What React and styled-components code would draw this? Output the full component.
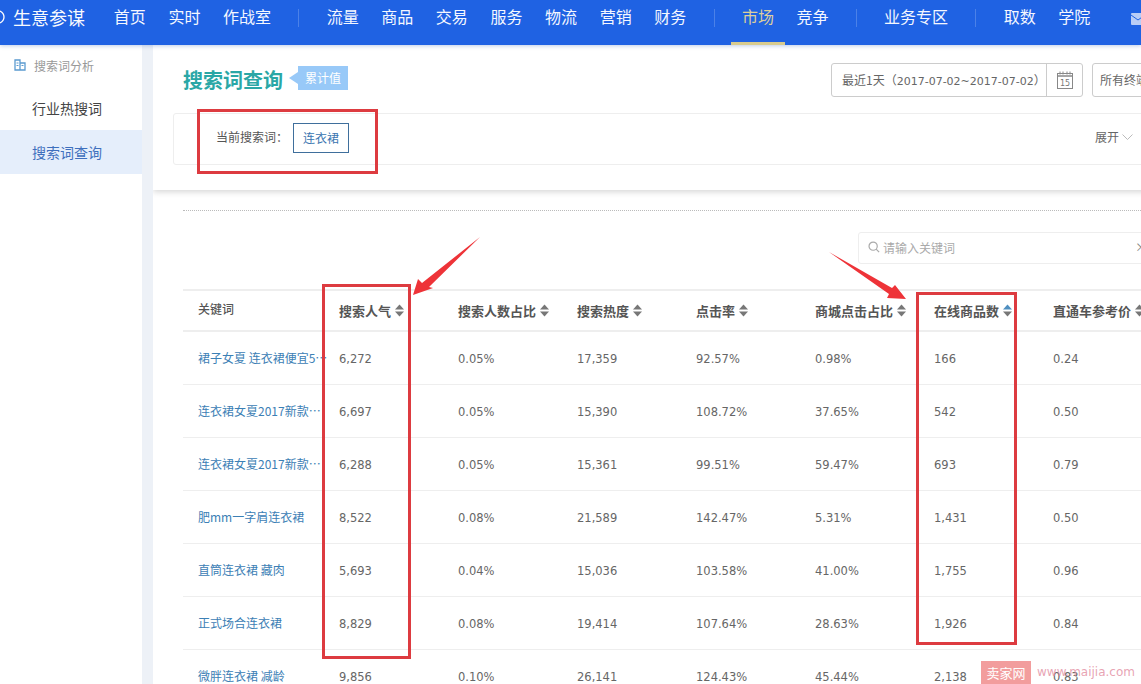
import React from "react";
import styled, { createGlobalStyle } from "styled-components";

const Global = createGlobalStyle`
  html, body { margin: 0; padding: 0; background: #fff; }
  body { font-family: "Noto Sans CJK SC", "Liberation Sans", sans-serif; color: #555; }
  * { box-sizing: border-box; }
`;
const Page = styled.div`position: relative; width: 1141px; height: 684px; overflow: hidden; background: #fff;`;
const TopBar = styled.header`
  height: 45px; background: #1f62e3; display: flex; align-items: flex-start; color: #fff;
  box-shadow: 0 1px 4px rgba(40,90,180,.3); position: relative; z-index: 2;
`;
const LogoArc = styled.svg`width: 5px; height: 14px; margin: 10px 8px 0 0; flex: none;`;
const Brand = styled.div`font-size: 18px; line-height: 35px; width: 72px; margin-right: 17.5px; flex: none; white-space: nowrap; opacity: .97;`;
const NavItem = styled.div`
  flex: none; height: 45px; padding: 0 11.3px; font-size: 16px; line-height: 32px; white-space: nowrap;
  color: ${p => (p.$active ? "#dccf9c" : "#f4f7ff")};
  border-bottom: 3px solid ${p => (p.$active ? "#d8cb8e" : "transparent")};
`;
const NavSep = styled.div`flex: none; width: 1px; height: 18px; margin: 9px 16px 0; background: rgba(255,255,255,.2);`;
const Mail = styled.svg`position: absolute; left: 1131px; top: 13px; width: 14px; height: 12px;`;

const Body = styled.div`display: flex; height: 639px; background: #edf1f7;`;
const Side = styled.aside`flex: none; width: 142px; background: #fff; margin-right: 11px;`;
const SideHead = styled.div`display: flex; align-items: center; gap: 8px; height: 40px; padding: 0 0 0 14px; font-size: 12px; color: #999;`;
const SideItem = styled.div`
  height: 44px; padding-left: 32px; font-size: 14px; line-height: 44px;
  color: ${p => (p.$active ? "#3e6fbd" : "#444")};
  background: ${p => (p.$active ? "#e5eefb" : "transparent")};
`;
const SideList = styled.div`margin-top: 1px;`;

const Main = styled.main`flex: none; width: 988px; background: #fff; overflow: hidden;`;
const TopCard = styled.section`
  width: 1020px; height: 145px; padding: 18px 13px 0 20px; background: #fff;
  box-shadow: 0 2px 6px rgba(0,0,0,.16); position: relative;
`;
const TitleRow = styled.div`display: flex; align-items: center; height: 34px; padding-left: 10px;`;
const Title = styled.h1`margin: 0; font-size: 20px; line-height: 34px; font-weight: 700; color: #2aa7a6; white-space: nowrap;`;
const Badge = styled.span`
  position: relative; margin-left: 15px; width: 50px; height: 24px; background: #98c9f8; color: #fff; font-size: 12px;
  line-height: 24px; text-align: center; margin-top: -4px;
  &::before { content: ""; position: absolute; left: -9px; top: 6px; border: 6px solid transparent; border-left: 0; border-right: 9px solid #98c9f8; }
`;
const DateBox = styled.div`
  margin-left: auto; width: 252px; height: 34px; border: 1px solid #ccc; border-radius: 3px; display: flex; align-items: center;
  font-size: 12px; color: #666; white-space: nowrap;
`;
const DateText = styled.div`flex: none; width: 215px; padding-left: 10px; height: 100%; line-height: 32px; border-right: 1px solid #ccc; text-spacing-trim: space-all; overflow: hidden;`;
const DateDigits = styled.span`font-family: "DejaVu Sans", sans-serif; font-size: 11px;`;
const CalIcon = styled.svg`width: 16px; height: 18px; margin-left: 10px;`;
const SelectBox = styled.div`
  margin-left: 9px; width: 68px; height: 34px; border: 1px solid #ccc; border-radius: 3px; padding-left: 7px;
  font-size: 12px; line-height: 32px; color: #666; white-space: nowrap; overflow: hidden;
`;
const FilterCard = styled.div`
  display: flex; align-items: center; height: 52px; margin-top: 16px; padding: 0 26px 0 42px; border: 1px solid #eee; border-radius: 3px;
  font-size: 12px; color: #555;
`;
const FilterLabel = styled.span`width: 77px; flex: none; margin-top: -5px;`;
const Tag = styled.span`flex: none; width: 56px; height: 30px; margin-top: -3px; border: 1px solid #3f6f9c; color: #3a75b0; text-align: center; line-height: 28px;`;
const Expand = styled.span`margin-left: auto; margin-top: -5px; display: flex; align-items: center; gap: 3px; color: #666;`;

const Content = styled.section`padding: 20px 0 0 30px; width: 1010px;`;
const Dotted = styled.div`border-top: 1px dotted #bbb; height: 0;`;
const SearchBox = styled.div`
  position: relative; margin: 21px 0 25px 675px; width: 290px; height: 32px; border: 1px solid #eee; border-radius: 3px;
  display: flex; align-items: center; gap: 3px; padding: 0 0 2px 9px; font-size: 12px; color: #aaa;
`;
const Clear = styled.span`position: absolute; left: 276px; top: 5px; color: #888; font-size: 12px;`;
const Row = styled.div`
  display: grid; grid-template-columns: 141px repeat(7, 119px); align-items: center; width: 974px;
  height: ${p => (p.$head ? "43px" : "53px")};
  border-top: ${p => (p.$head ? "2px solid #eee" : "0")};
  border-bottom: ${p => (p.$head ? "2px solid #eee" : "1px solid #eee")};
`;
const HeadCell = styled.div`
  display: flex; align-items: center; gap: 4px; padding-left: 15px;
  font-size: ${p => (p.$first ? "12px" : "13px")}; font-weight: ${p => (p.$first ? 500 : 700)}; color: #555; white-space: nowrap;
  margin-top: ${p => (p.$first ? "-4px" : "0")};
`;
const KeyCell = styled.div`
  padding-left: 15px; font-size: 12px; color: #3c80b5; white-space: nowrap; overflow: hidden; text-overflow: ellipsis; margin-top: -2px; width: 146px;
`;
const Cell = styled.div`padding-left: 15px; font-family: "DejaVu Sans", sans-serif; font-size: 11.5px; color: #666; margin-top: 2px;`;
const Sort = styled.svg`width: 9px; height: 13px; flex: none;`;

const RedBox = styled.div`position: absolute; border: 3px solid #dd3b40; pointer-events: none; z-index: 3;`;
const Arrows = styled.svg`position: absolute; left: 0; top: 0; width: 1141px; height: 684px; pointer-events: none; z-index: 3;`;
const Watermark = styled.div`position: absolute; left: 981px; top: 661px; display: flex; align-items: center; gap: 6px; z-index: 4;`;
const WmTag = styled.span`width: 50px; height: 23px; background: rgba(240,140,140,.85); color: #fff; font-size: 13px; line-height: 23px; text-align: center;`;
const WmUrl = styled.span`font-family: "DejaVu Sans", sans-serif; font-size: 12px; color: rgba(226,140,160,.8); white-space: nowrap; margin-top: -2px;`;

const SortIcon = ({ up = "#777" }) => (
  <Sort viewBox="0 0 9 13"><path d="M4.5 0.5 9 5.5H0Z" fill={up} /><path d="M0 7.5H9L4.5 12.5Z" fill="#777" /></Sort>
);

const columns = ["搜索人气", "搜索人数占比", "搜索热度", "点击率", "商城点击占比", "在线商品数", "直通车参考价"];
const rows = [
  ["裙子女夏 连衣裙便宜50元以内", "6,272", "0.05%", "17,359", "92.57%", "0.98%", "166", "0.24"],
  ["连衣裙女夏2017新款时尚气质", "6,697", "0.05%", "15,390", "108.72%", "37.65%", "542", "0.50"],
  ["连衣裙女夏2017新款韩版修身", "6,288", "0.05%", "15,361", "99.51%", "59.47%", "693", "0.79"],
  ["肥mm一字肩连衣裙", "8,522", "0.08%", "21,589", "142.47%", "5.31%", "1,431", "0.50"],
  ["直筒连衣裙 藏肉", "5,693", "0.04%", "15,036", "103.58%", "41.00%", "1,755", "0.96"],
  ["正式场合连衣裙", "8,829", "0.08%", "19,414", "107.64%", "28.63%", "1,926", "0.84"],
  ["微胖连衣裙 减龄", "9,856", "0.10%", "26,141", "124.43%", "45.44%", "2,138", "0.83"],
];
const navGroups = [
  ["首页", "实时", "作战室"],
  ["流量", "商品", "交易", "服务", "物流", "营销", "财务"],
  ["市场", "竞争"],
  ["业务专区"],
  ["取数", "学院"],
];

export default function App() {
  return (
    <Page>
      <Global />
      <TopBar>
        <LogoArc viewBox="0 0 5 14"><path d="M0 1C3 2.5 4 5 4 7s-1 4.500-4 6" fill="none" stroke="#fff" strokeWidth="1.3" /></LogoArc>
        <Brand>生意参谋</Brand>
        {navGroups.map((g, i) => (
          <React.Fragment key={i}>
            {i > 0 && <NavSep />}
            {g.map(n => <NavItem key={n} $active={n === "市场"}>{n}</NavItem>)}
          </React.Fragment>
        ))}
        <Mail viewBox="0 0 14 12"><rect width="14" height="12" rx="1" fill="#b9cdf6" /><path d="M0 2l7 5 7-5" fill="none" stroke="#1f62e3" /></Mail>
      </TopBar>
      <Body>
        <Side>
          <SideHead>
            <svg width="12" height="12" viewBox="0 0 12 12"><path d="M1 1h5v10H1zM6 4h5v7H6z" fill="none" stroke="#5b9bd0" strokeWidth="1.3" /><path d="M2.500 4h2M2.500 6.500h2M7.500 6.500h2" stroke="#5b9bd0" /></svg>
            搜索词分析
          </SideHead>
          <SideList>
            <SideItem>行业热搜词</SideItem>
            <SideItem $active>搜索词查询</SideItem>
          </SideList>
        </Side>
        <Main>
          <TopCard>
            <TitleRow>
              <Title>搜索词查询</Title>
              <Badge>累计值</Badge>
              <DateBox>
                <DateText>最近1天（<DateDigits>2017-07-02~2017-07-02</DateDigits>）</DateText>
                <CalIcon viewBox="0 0 16 18">
                  <rect x="0.500" y="2.500" width="15" height="15" fill="none" stroke="#888" />
                  <path d="M1 5h14" stroke="#888" strokeWidth="1.500" />
                  <path d="M3 0.500v3M6 0.500v3M10 0.500v3M13 0.500v3" stroke="#888" />
                  <text x="8" y="15" fontSize="8" textAnchor="middle" fill="#777" fontFamily="DejaVu Sans">15</text>
                </CalIcon>
              </DateBox>
              <SelectBox>所有终端</SelectBox>
            </TitleRow>
            <FilterCard>
              <FilterLabel>当前搜索词：</FilterLabel>
              <Tag>连衣裙</Tag>
              <Expand>展开
                <svg width="11" height="6" viewBox="0 0 11 6"><path d="M0.500 0.500 5.500 5.500 10.500 0.500" fill="none" stroke="#bbb" /></svg>
              </Expand>
            </FilterCard>
          </TopCard>
          <Content>
            <Dotted />
            <SearchBox>
              <svg width="12" height="12" viewBox="0 0 14 14"><circle cx="6" cy="6" r="4.800" fill="none" stroke="#aaa" strokeWidth="1.400" /><path d="M9.500 9.500 13 13" stroke="#aaa" strokeWidth="1.400" /></svg>
              请输入关键词
              <Clear>×</Clear>
            </SearchBox>
            <Row $head>
              <HeadCell $first>关键词</HeadCell>
              {columns.map(c => (
                <HeadCell key={c}>{c}<SortIcon up={c === "在线商品数" ? "#4f8fc0" : "#777"} /></HeadCell>
              ))}
            </Row>
            {rows.map(r => (
              <Row key={r[0]}>
                <KeyCell>{r[0]}</KeyCell>
                {r.slice(1).map((v, i) => <Cell key={i}>{v}</Cell>)}
              </Row>
            ))}
          </Content>
        </Main>
      </Body>
      <RedBox style={{ left: 197, top: 109, width: 181, height: 65 }} />
      <RedBox style={{ left: 322, top: 284, width: 89, height: 375 }} />
      <RedBox style={{ left: 916, top: 292, width: 101, height: 353 }} />
      <Arrows viewBox="0 0 1141 684">
        <path d="M480 237 429 287 433 288 413 295 418 279 422 283Z" fill="#ee3338" />
        <path d="M829 252 892 288 895 285 906 299 887 298 889 294Z" fill="#ee3338" />
      </Arrows>
      <Watermark><WmTag>卖家网</WmTag><WmUrl>www.maijia.com</WmUrl></Watermark>
    </Page>
  );
}
